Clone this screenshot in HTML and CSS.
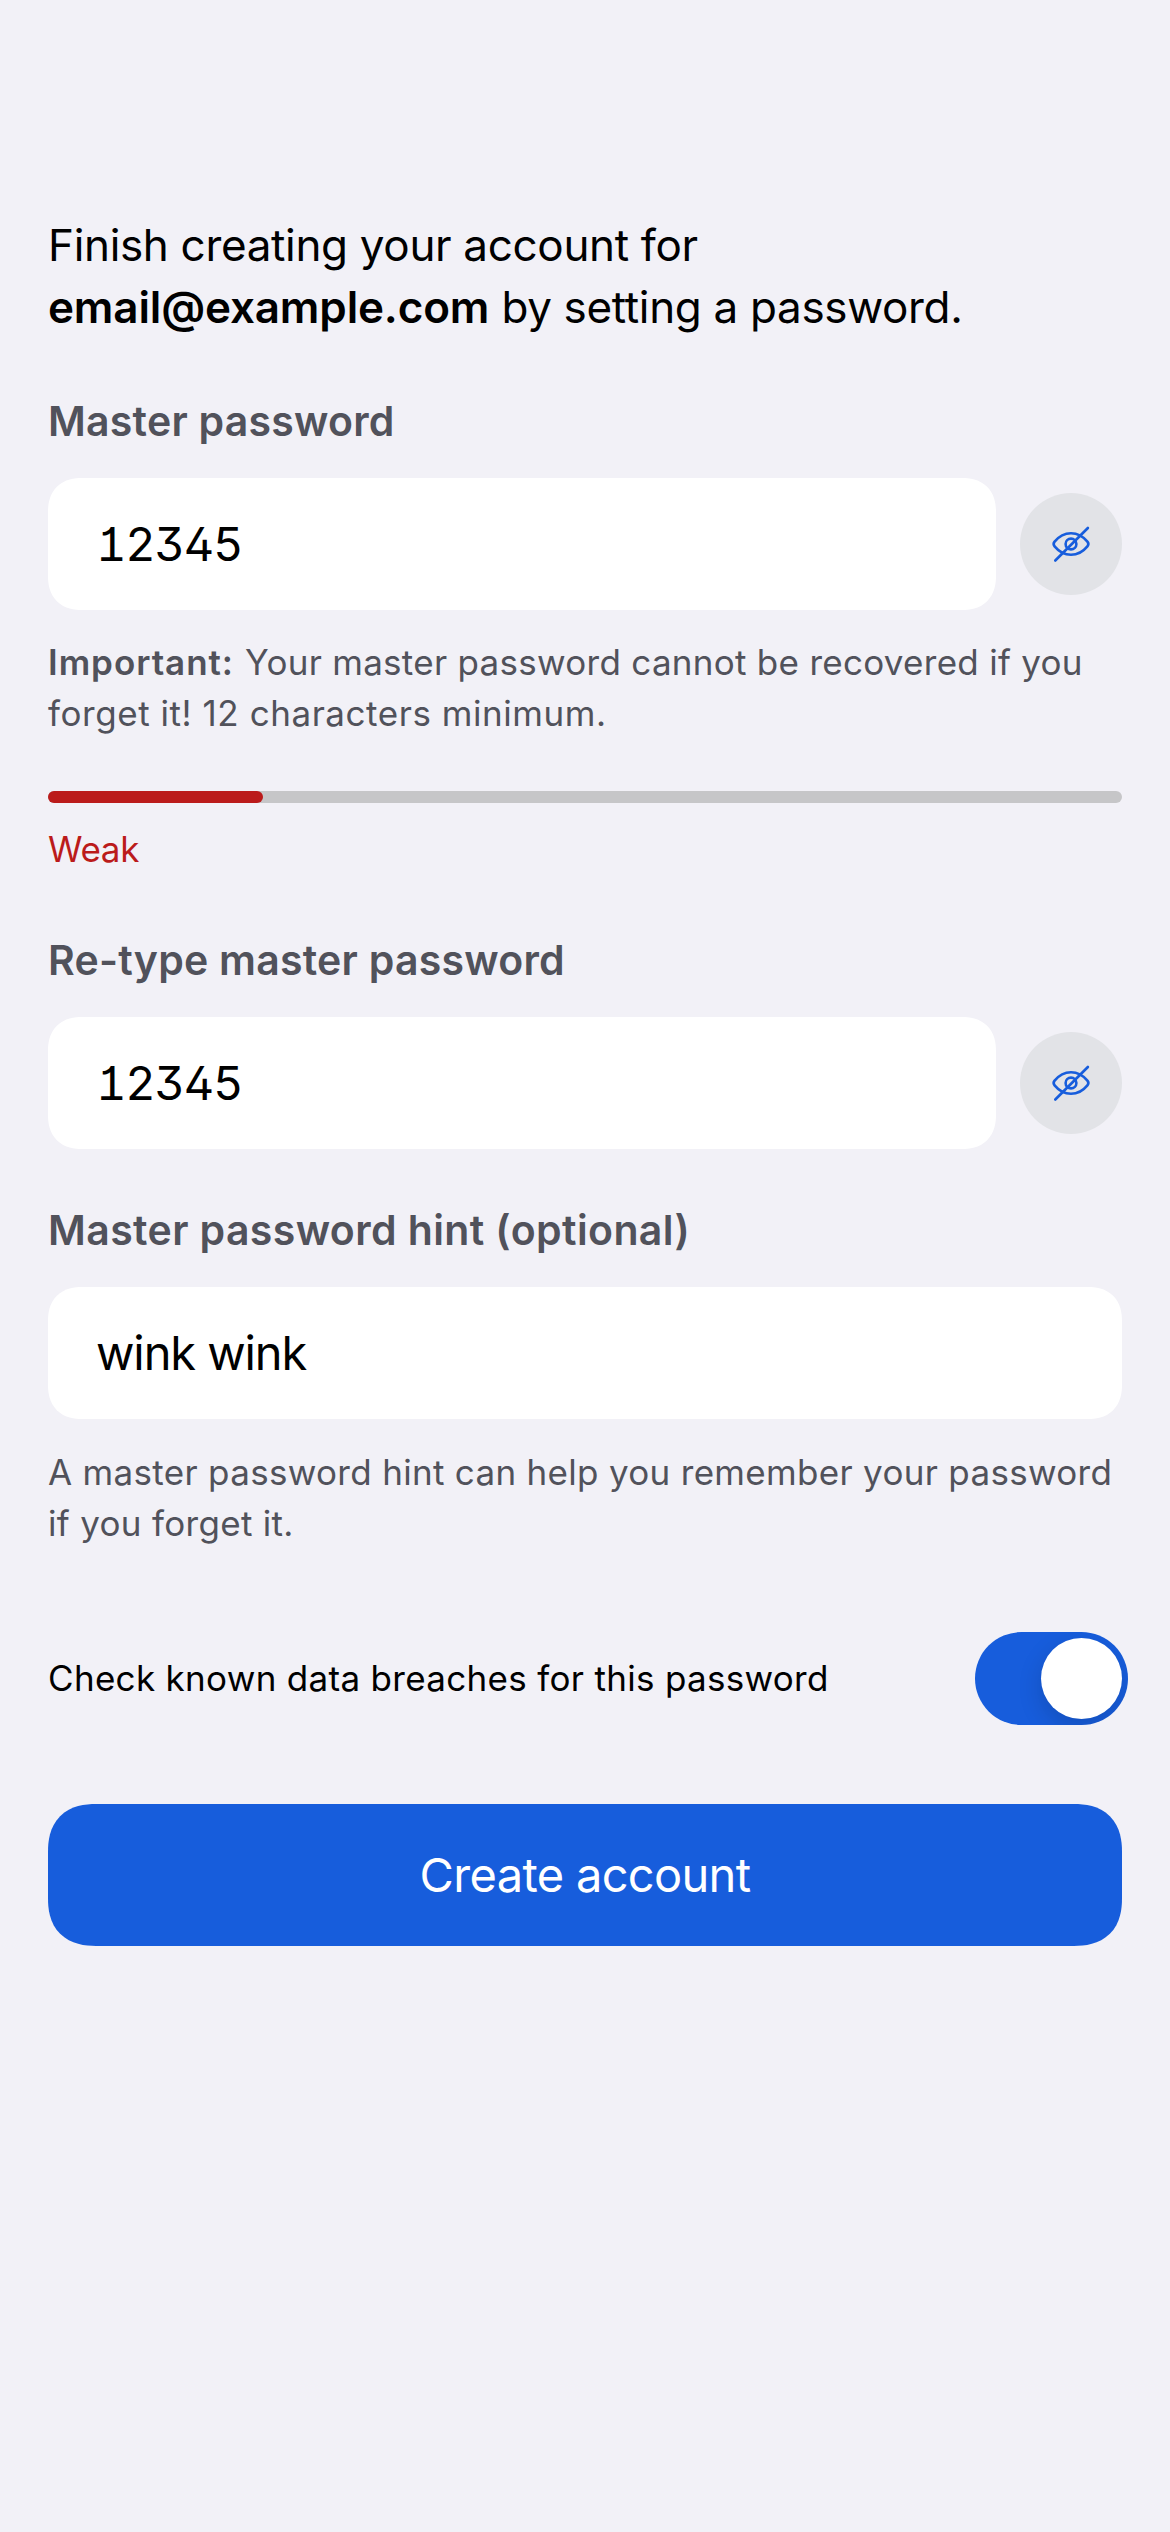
FILE: index.html
```html
<!DOCTYPE html>
<html lang="en">
<head>
<meta charset="utf-8">
<title>Create account</title>
<link rel="stylesheet" href="styles.css">
</head>
<body>
<svg class="sprite" aria-hidden="true">
  <symbol id="eye-slash" viewBox="0 0 102 102">
    <path d="M34.6 48.6C39.2 43 44.8 40.2 51 40.2s11.8 2.8 16.4 8.4c1.400 1.700 1.400 3.100 0 4.800C62.800 59 57.200 61.800 51 61.800s-11.800-2.800-16.400-8.400c-1.400-1.700-1.400-3.100 0-4.800Z"/>
    <circle cx="51" cy="51" r="5.400"/>
    <path d="M67.900 35 35.300 67.500"/>
  </symbol>
</svg>
<main class="screen">
  <p class="intro">Finish creating your account for<br><strong class="email">email@example.com</strong> by setting a password.</p>

  <label class="label" for="password">Master password</label>
  <div class="row">
    <div class="field code" id="password">12345</div>
    <button class="reveal" aria-label="Hide password"><svg class="icon"><use href="#eye-slash"/></svg></button>
  </div>
  <p class="help"><strong class="important">Important:</strong> Your master password cannot be recovered if you <span class="loose">forget it! 12 characters minimum.</span></p>

  <div class="meter"><div class="meter-fill" style="width: 20%"></div></div>
  <p class="strength">Weak</p>

  <label class="label" for="retype">Re-type master password</label>
  <div class="row">
    <div class="field code" id="retype">12345</div>
    <button class="reveal" aria-label="Hide password"><svg class="icon"><use href="#eye-slash"/></svg></button>
  </div>

  <label class="label label-hint" for="hint">Master password hint (optional)</label>
  <div class="row">
    <div class="field" id="hint">wink wink</div>
  </div>
  <p class="help help-hint">A master password hint can help you remember your password if you forget it.</p>

  <div class="option">
    <span>Check known data breaches for this password</span>
    <div class="switch" role="switch" aria-checked="true"><div class="knob"></div></div>
  </div>

  <button class="submit">Create account</button>
</main>
</body>
</html>
```
FILE: styles.css
```css
* {
  box-sizing: border-box;
}

body {
  margin: 0;
  background: #f2f1f7;
  color: #000;
  font-family: Inter, "Liberation Sans", sans-serif;
}

p {
  margin: 0;
}

strong {
  font-weight: 600;
}

button {
  border: 0;
  padding: 0;
  font: inherit;
}

.sprite {
  display: none;
}

.screen {
  display: flex;
  flex-direction: column;
  min-height: 2532px;
  padding: 214px 48px 0;
}

.intro {
  margin-bottom: 57px;
  font-size: 44px;
  line-height: 62px;
  letter-spacing: -0.33px;
}

.email {
  letter-spacing: -0.15px;
}

.label {
  margin-bottom: 30px;
  color: #51525b;
  font-size: 41px;
  font-weight: 600;
  line-height: 53px;
  letter-spacing: 0.24px;
}

.label-hint {
  margin-top: 55px;
  letter-spacing: 0.39px;
}

.row {
  display: flex;
  align-items: center;
  gap: 24px;
}

.field {
  flex: 1;
  height: 132px;
  padding: 0 48px;
  border-radius: 34px;
  corner-shape: superellipse(1.2);
  background: #fff;
  font-size: 47px;
  line-height: 132px;
  letter-spacing: -1.1px;
}

.code {
  font-feature-settings: "tnum", "cv01", "ss01", "zero";
  letter-spacing: -1.2px;
}

.reveal {
  width: 102px;
  height: 102px;
  border-radius: 50%;
  background: #e2e3e7;
}

.icon {
  display: block;
  width: 102px;
  height: 102px;
  fill: none;
  stroke: #175ddc;
  stroke-width: 2.6;
  stroke-linecap: round;
  stroke-linejoin: round;
}

.help {
  margin-top: 27px;
  margin-right: -10px;
  color: #51525b;
  font-size: 35px;
  line-height: 51px;
  letter-spacing: 0.28px;
}

.help-hint {
  margin-top: 28px;
  letter-spacing: 0.31px;
}

.important {
  margin-right: 1px;
  letter-spacing: 0.95px;
}

.loose {
  letter-spacing: 0.55px;
}

.meter {
  height: 12px;
  margin-top: 52px;
  border-radius: 6px;
  background: #c6c6c8;
}

.meter-fill {
  height: 100%;
  border-radius: 6px;
  background: #bb1b1b;
}

.strength {
  margin: 21px 0 59px;
  color: #bb1b1b;
  font-size: 35px;
  line-height: 51px;
  letter-spacing: -0.3px;
}

.option {
  display: flex;
  align-items: center;
  justify-content: space-between;
  margin: 83px -6px 79px 0;
  font-size: 35px;
  line-height: 51px;
  letter-spacing: 0.31px;
}

.switch {
  display: flex;
  justify-content: flex-end;
  width: 153px;
  height: 93px;
  padding: 6px;
  border-radius: 47px;
  background: #175ddc;
  overflow: hidden;
}

.knob {
  width: 81px;
  height: 81px;
  border-radius: 50%;
  background: #fff;
  box-shadow: 0 9px 24px rgba(0, 0, 0, 0.15);
}

.submit {
  height: 142px;
  border-radius: 48px;
  corner-shape: superellipse(1.25);
  background: #175ddc;
  color: #fff;
  font-size: 47px;
  line-height: 142px;
  letter-spacing: -0.67px;
}
```
